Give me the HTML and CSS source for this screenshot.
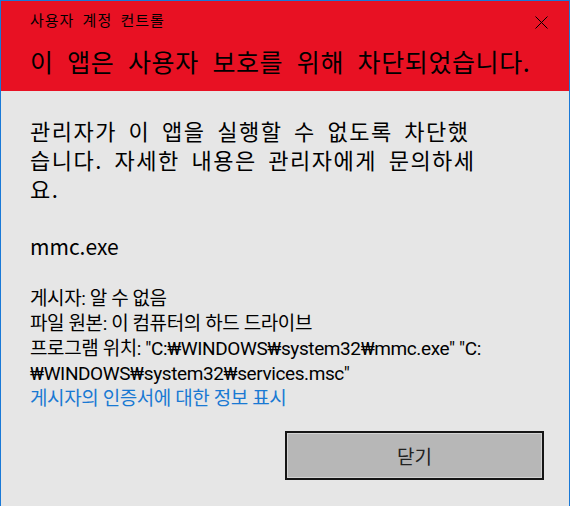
FILE: index.html
```html
<!DOCTYPE html>
<html lang="ko">
<head>
<meta charset="utf-8">
<title>사용자 계정 컨트롤</title>
<link rel="stylesheet" href="styles.css">
</head>
<body>
<div class="window">
  <header class="banner">
    <div class="titlebar">
      <span class="app-title">사용자 계정 컨트롤</span>
      <svg class="close" width="13" height="13" viewBox="0 0 13 13" aria-label="닫기"><path d="M0.5 0.5L12.5 12.5M12.5 0.5L0.5 12.5" stroke="#000" stroke-width="1" fill="none"/></svg>
    </div>
    <h1 class="headline">이 앱은 사용자 보호를 위해 차단되었습니다.</h1>
  </header>
  <main class="content">
    <p class="message">관리자가 이 앱을 실행할 수 없도록 차단했습니다. 자세한 내용은 관리자에게 문의하세요.</p>
    <p class="program">mmc.exe</p>
    <ul class="details">
      <li>게시자: 알 수 없음</li>
      <li>파일 원본: 이 컴퓨터의 하드 드라이브</li>
      <li>프로그램 위치: "C:₩WINDOWS₩system32₩mmc.exe" "C:<wbr>₩WINDOWS₩system32₩services.msc"</li>
      <li><a class="cert-link" href="#">게시자의 인증서에 대한 정보 표시</a></li>
    </ul>
    <div class="actions"><button class="btn" type="button">닫기</button></div>
  </main>
</div>
</body>
</html>
```

FILE: styles.css
```css
* { box-sizing: border-box; }
html, body { margin: 0; padding: 0; }
body {
  width: 570px;
  height: 506px;
  overflow: hidden;
  background: #e6e6e6;
  font-family: "Noto Sans CJK KR", "Noto Sans", sans-serif;
  color: #000;
}
.window {
  height: 506px;
  border: 1px solid #1979d7;
  border-bottom: 0;
  display: flex;
  flex-direction: column;
}
.banner {
  background: #e81123;
  height: 90px;
  flex: none;
  padding: 9px 0 0 29px;
}
.titlebar {
  display: flex;
  justify-content: space-between;
  align-items: flex-start;
  padding-right: 21px;
}
.app-title {
  font-size: 15px;
  letter-spacing: 1px;
  word-spacing: 3px;
  line-height: 20px;
}
.close { display: block; margin-top: 6px; }
.headline {
  margin: 15px 0 0;
  font-size: 25px;
  font-weight: normal;
  letter-spacing: 0.6px;
  word-spacing: 6px;
  line-height: 32px;
}
.content {
  flex: 1;
  padding: 25px 0 0 29px;
  display: flex;
  flex-direction: column;
}
.message {
  margin: 0;
  width: 450px;
  font-size: 22px;
  letter-spacing: 1.5px;
  word-spacing: 4px;
  line-height: 29px;
}
.program {
  margin: 29px 0 0;
  font-size: 21px;
  line-height: 28px;
}
.details {
  list-style: none;
  margin: 26px 0 0;
  padding: 0;
  width: 530px;
  font-family: Roboto, "Noto Sans CJK KR", sans-serif;
  font-size: 19px;
  letter-spacing: -0.4px;
  line-height: 25px;
}
.cert-link {
  color: #1979d3;
  text-decoration: none;
}
.actions {
  display: flex;
  justify-content: flex-end;
  padding: 20px 25px 0 0;
}
.btn {
  width: 259px;
  height: 49px;
  background: #b7b7b7;
  border: 2px solid #151515;
  box-shadow: inset 0 0 0 1px #d2d2d2;
  font: 19px "Noto Sans CJK KR", sans-serif;
  color: #222;
  padding: 0;
}
```
